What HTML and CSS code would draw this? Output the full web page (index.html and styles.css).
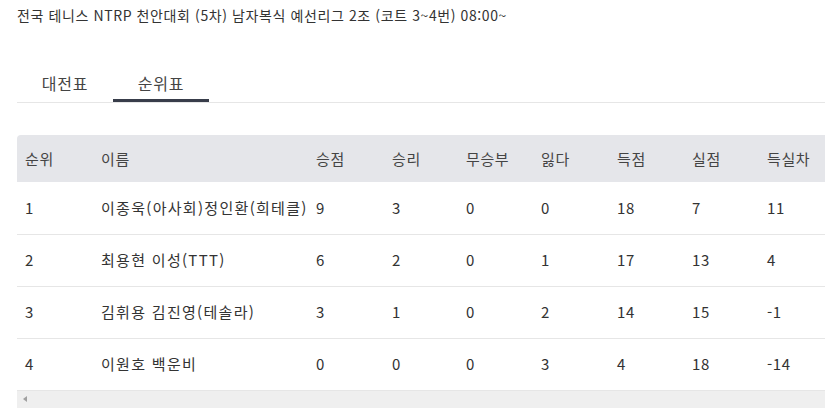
FILE: index.html
```html
<!DOCTYPE html>
<html lang="ko">
<head>
    <meta charset="UTF-8">
    <meta name="viewport" content="width=device-width, initial-scale=1.0">
    <title>순위표</title>
    <link rel="stylesheet" href="styles.css">
</head>
<body>
    <p class="title">전국 테니스 NTRP 천안대회 (5차) 남자복식 예선리그 2조 (코트 3~4번) 08:00~</p>

    <div class="tabs">
        <div class="tab">대전표</div>
        <div class="tab active">순위표</div>
    </div>

    <div class="table-wrap">
        <table class="standings">
            <colgroup>
                <col style="width: 76px">
                <col style="width: 215px">
                <col style="width: 76px">
                <col style="width: 74px">
                <col style="width: 75px">
                <col style="width: 76px">
                <col style="width: 75px">
                <col style="width: 75px">
                <col style="width: 75px">
            </colgroup>
            <thead>
                <tr>
                    <th>순위</th>
                    <th>이름</th>
                    <th>승점</th>
                    <th>승리</th>
                    <th>무승부</th>
                    <th>잃다</th>
                    <th>득점</th>
                    <th>실점</th>
                    <th>득실차</th>
                </tr>
            </thead>
            <tbody>
                <tr>
                    <td>1</td>
                    <td class="name">이종욱(아사회)정인환(희테클)</td>
                    <td>9</td><td>3</td><td>0</td><td>0</td><td>18</td><td>7</td><td>11</td>
                </tr>
                <tr>
                    <td>2</td>
                    <td class="name">최용현 이성(TTT)</td>
                    <td>6</td><td>2</td><td>0</td><td>1</td><td>17</td><td>13</td><td>4</td>
                </tr>
                <tr>
                    <td>3</td>
                    <td class="name">김휘용 김진영(테솔라)</td>
                    <td>3</td><td>1</td><td>0</td><td>2</td><td>14</td><td>15</td><td>-1</td>
                </tr>
                <tr>
                    <td>4</td>
                    <td class="name">이원호 백운비</td>
                    <td>0</td><td>0</td><td>0</td><td>3</td><td>4</td><td>18</td><td>-14</td>
                </tr>
            </tbody>
        </table>
    </div>
    <div class="hscroll"><span class="hscroll-arrow"></span></div>
</body>
</html>
```

FILE: styles.css
```css
body {
    margin: 0;
    padding: 0 0 0 17px;
    font-family: "Noto Sans CJK KR", "Noto Sans", sans-serif;
    font-size: 14px;
    line-height: 20px;
    color: #333;
    background: #fff;
    overflow: hidden;
}
.title {
    margin: 0;
    padding-top: 5px;
    font-size: 14px;
    letter-spacing: 0.6px;
    white-space: nowrap;
}
.tabs {
    display: flex;
    margin-top: 37px;
    border-bottom: 1px solid #e6e6e6;
}
.tab {
    width: 96px;
    padding: 11px 0 6px;
    border-bottom: 3px solid transparent;
    text-align: center;
    font-size: 16px;
    letter-spacing: 0.8px;
    color: #444;
}
.tab.active {
    border-bottom-color: #383d4a;
}
.table-wrap {
    margin-top: 32px;
    overflow: hidden;
    border-top-left-radius: 4px;
}
.standings {
    border-collapse: collapse;
    width: 817px;
    table-layout: fixed;
    font-size: 15px;
    letter-spacing: 0.6px;
}
.standings th,
.standings td {
    box-sizing: border-box;
    padding: 0 8px;
    text-align: left;
    font-weight: normal;
    white-space: nowrap;
}
.standings thead th {
    height: 47px;
    background: #e5e6ea;
    color: #444;
}
.standings tbody td {
    height: 52px;
    border-bottom: 1px solid #e6e6e6;
}
.standings td.name {
    letter-spacing: 1.3px;
}
.hscroll {
    height: 17px;
    background: #efefef;
    display: flex;
    align-items: center;
    padding-left: 6px;
}
.hscroll-arrow {
    width: 0;
    height: 0;
    border-top: 3.5px solid transparent;
    border-bottom: 3.5px solid transparent;
    border-right: 4px solid #a0a0a0;
}
```
